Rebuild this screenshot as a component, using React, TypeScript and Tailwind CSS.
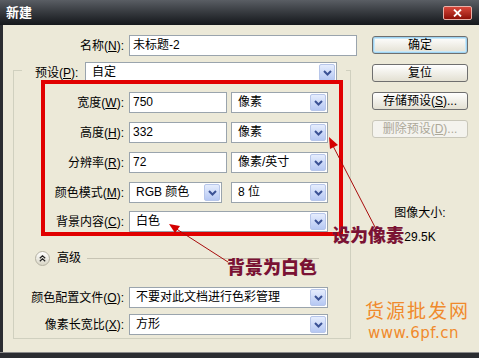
import React from "react";

const Chevron = () => (
  <svg width="9" height="6" viewBox="0 0 9 6">
    <path d="M1 1 L4.5 4.5 L8 1" fill="none" stroke="#3b5295" strokeWidth="2" />
  </svg>
);

const Input = ({ value, width }: { value: string; width: string }) => (
  <div className={`${width} h-[21px] shrink-0 border border-[#9aa4ad] bg-white pl-[3px] leading-[19px]`}>
    {value}
  </div>
);

const Select = ({ value, width }: { value: string; width: string }) => (
  <div className={`${width} flex h-[21px] shrink-0 border border-[#9aa4ad] bg-white p-[1px]`}>
    <span className="flex-1 truncate pl-[5px] leading-[17px]">{value}</span>
    <span className="flex w-[16px] items-center justify-center rounded-[2px] border border-[#b7c6ea] bg-linear-to-b from-[#e6edfd] to-[#b6c8f3]">
      <Chevron />
    </span>
  </div>
);

const Label = ({ width, children }: { width: string; children: React.ReactNode }) => (
  <span className={`${width} shrink-0 pr-[5px] text-right`}>{children}</span>
);

const Button = ({ children, primary, disabled }: { children: React.ReactNode; primary?: boolean; disabled?: boolean }) => (
  <div
    className={`flex h-[18px] w-[96px] items-center justify-center rounded-[3px] border leading-none ${
      disabled
        ? "border-[#c9c7ba] bg-[#f4f3ee] text-[#aca899]"
        : "border-[#6f6f6f] bg-linear-to-b from-[#ffffff] to-[#e3e0d2]"
    } ${primary ? "shadow-[inset_0_0_0_1px_#9fd4f2,inset_0_0_0_2px_#c9e8f8]" : ""}`}
  >
    {children}
  </div>
);

export default function App() {
  return (
    <div className="relative flex h-[358px] w-[479px] flex-col overflow-hidden bg-[#2b2d31] font-['Liberation_Sans','Noto_Sans_CJK_SC',sans-serif] text-[12px] text-black">
      {/* title bar */}
      <div className="flex h-[25px] shrink-0 items-center justify-between bg-linear-to-b from-[#5a5e64] to-[#15181c] pl-[6px] pr-[7px]">
        <span className="text-[13px] font-bold text-white">新建</span>
        <div className="flex h-[14px] w-[29px] items-center justify-center rounded-[2px] border border-[#e9b0a8] bg-linear-to-b from-[#d8473a] to-[#8e0e07]">
          <svg width="9" height="8" viewBox="0 0 9 8">
            <path d="M1 0.5 L8 7.5 M8 0.5 L1 7.5" stroke="white" strokeWidth="1.8" />
          </svg>
        </div>
      </div>

      {/* body */}
      <div className="ml-[3px] flex h-[327px] shrink-0 bg-[#ece9d8]">
        <div className="flex w-[354px] flex-col">
          <div className="mt-[10px] flex items-center">
            <Label width="w-[126px]">名称(<u>N</u>):</Label>
            <Input value="未标题-2" width="w-[228px]" />
          </div>

          <div className="ml-[10px] mt-[14px] flex w-[338px] flex-col border border-[#d0d0bf] pb-[3px]">
            <div className="-mt-[9px] ml-[8px] flex w-[324px] items-center bg-[#ece9d8] pl-[13px] pr-[9px]">
              <span className="w-[50px] shrink-0 pr-[5px]">预设(<u>P</u>):</span>
              <Select value="自定" width="w-[252px]" />
            </div>

            <div className="mt-[9px] flex flex-col gap-[9px]">
              <div className="flex items-center">
                <Label width="w-[115px]">宽度(<u>W</u>):</Label>
                <Input value="750" width="w-[98px]" />
                <div className="ml-[4px]"><Select value="像素" width="w-[97px]" /></div>
              </div>
              <div className="flex items-center">
                <Label width="w-[115px]">高度(<u>H</u>):</Label>
                <Input value="332" width="w-[98px]" />
                <div className="ml-[4px]"><Select value="像素" width="w-[97px]" /></div>
              </div>
              <div className="flex items-center">
                <Label width="w-[115px]">分辨率(<u>R</u>):</Label>
                <Input value="72" width="w-[98px]" />
                <div className="ml-[4px]"><Select value="像素/英寸" width="w-[97px]" /></div>
              </div>
              <div className="flex items-center">
                <Label width="w-[115px]">颜色模式(<u>M</u>):</Label>
                <Select value="RGB 颜色" width="w-[93px]" />
                <div className="ml-[9px]"><Select value="8 位" width="w-[97px]" /></div>
              </div>
              <div className="-mt-[1px] flex items-center">
                <Label width="w-[115px]">背景内容(<u>C</u>):</Label>
                <Select value="白色" width="w-[199px]" />
              </div>
            </div>

            <div className="ml-[21px] mt-[18px] flex h-[16px] items-center">
              <span className="flex h-[15px] w-[15px] items-center justify-center rounded-full border border-[#b4b1a2] bg-linear-to-b from-[#ffffff] to-[#d9d6c6]">
                <svg width="7" height="7" viewBox="0 0 7 7">
                  <path d="M0.8 3.2 L3.5 0.8 L6.2 3.2 M0.8 6.2 L3.5 3.8 L6.2 6.2" fill="none" stroke="#222" strokeWidth="1.2" />
                </svg>
              </span>
              <span className="ml-[7px]">高级</span>
              <span className="ml-[6px] h-px w-[232px] bg-[#c7c4b4]" />
            </div>

            <div className="mt-[21px] flex flex-col gap-[6px]">
              <div className="flex items-center">
                <Label width="w-[115px]">颜色配置文件(<u>O</u>):</Label>
                <Select value="不要对此文档进行色彩管理" width="w-[199px]" />
              </div>
              <div className="flex items-center">
                <Label width="w-[115px]">像素长宽比(<u>X</u>):</Label>
                <Select value="方形" width="w-[199px]" />
              </div>
            </div>
          </div>
        </div>

        <div className="ml-[15px] flex w-[96px] flex-col">
          <div className="mt-[11px] flex flex-col gap-[10px]">
            <Button primary>确定</Button>
            <Button>复位</Button>
            <Button>存储预设(<u>S</u>)...</Button>
            <Button disabled>删除预设(<u>D</u>)...</Button>
          </div>
          <div className="mt-[68px] text-center leading-[15px]">图像大小:</div>
          <div className="mt-[9px] text-center leading-[15px]">29.5K</div>
        </div>
      </div>
      <div className="h-px shrink-0 bg-[#8a8a8a]" />

      {/* annotations */}
      <div className="absolute left-[41px] top-[80px] h-[156px] w-[302px] border-[4px] border-[#e10000]" />
      <svg className="pointer-events-none absolute left-0 top-0" width="479" height="358">
        <line x1="376" y1="229" x2="332" y2="144" stroke="#a80c0c" strokeWidth="1" />
        <polygon points="329,137 338,145 330,149" fill="#d40000" />
        <line x1="228" y1="262" x2="175" y2="228" stroke="#a80c0c" strokeWidth="1" />
        <polygon points="169,224 180,226 175,233" fill="#d40000" />
      </svg>
      <span className="absolute left-[332px] top-[226px] text-[18px] font-black leading-[20px] text-[#7a1234]">设为像素</span>
      <span className="absolute left-[227px] top-[258px] text-[18px] font-black leading-[20px] text-[#7a1234]">背景为白色</span>
      <span className="absolute left-[365px] top-[301px] text-[19px] leading-[22px] tracking-[2px] text-[#f08a2c]">货源批发网</span>
      <span className="absolute left-[368px] top-[324px] font-['DejaVu_Sans',sans-serif] text-[15px] leading-[18px] tracking-[0.5px] text-[#f08a2c]">www.6pf.cn</span>
    </div>
  );
}
